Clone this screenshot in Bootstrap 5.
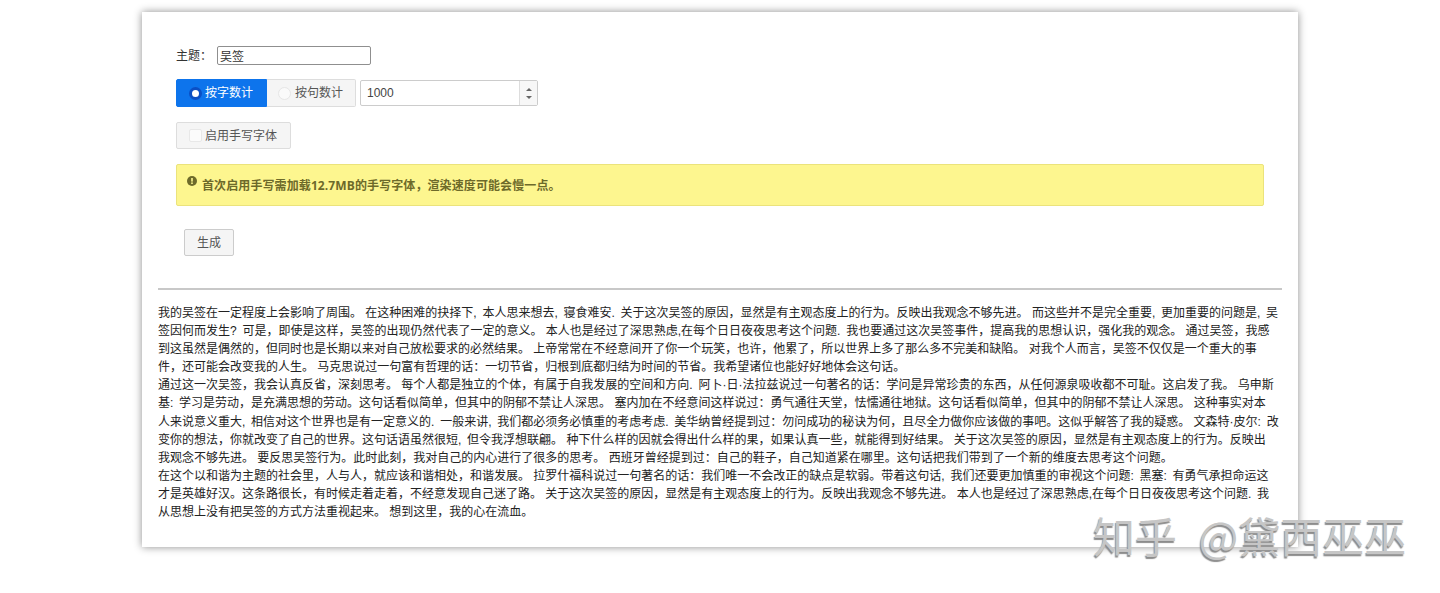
<!DOCTYPE html>
<html lang="zh-CN">
<head>
    <meta charset="UTF-8">
    <title>生成器</title>
    <link href="https://cdn.jsdelivr.net/npm/bootstrap@5.3.0/dist/css/bootstrap.min.css" rel="stylesheet">
    <style>
        body { background: #fff; font-family: "Liberation Sans", "Noto Sans CJK SC", sans-serif; font-size: 12px; color: #333; padding-top: 12px; min-height: 100vh; }
        .sheet { width: 1156px; height: 535px; margin-left: 142px; padding: 34px 16px 0; background: #fff; box-shadow: 0 0 8px rgba(0,0,0,.45); }
        .form-area { padding: 0 18px; }
        .topic-input { width: 154px; height: 19px; border: 1px solid #8f8f8f; border-radius: 2px; padding: 0 2px; font: inherit; color: #333; margin-left: 5px; }
        .seg-row { margin-top: 14px; }
        .seg-btn { height: 28px; display: flex; align-items: center; padding-left: 12px; gap: 3px; border: 1px solid #ddd; background: #f5f5f5; color: #555; }
        .seg-btn.on { background: #0d74ec; border-color: #0d74ec; color: #fff; width: 91px; border-radius: 2px 0 0 2px; }
        .seg-btn.off { width: 89px; border-left: 0; border-radius: 0 2px 2px 0; padding-left: 11px; gap: 4px; }
        .dot { width: 13px; height: 13px; border-radius: 50%; background: #fafafa; border: 1px solid #e6e6e6; flex: none; }
        .on .dot { background: #fff; border: 3px solid #0b4fc4; }
        .num-box { width: 178px; height: 26px; margin-left: 4px; border: 1px solid #ccc; border-radius: 2px; display: flex; align-items: stretch; background: #fff; }
        .num-val { flex: 1; padding: 3px 6px; font-size: 12px; color: #444; }
        .num-arrows { width: 18px; border-left: 1px solid #ddd; background: #f7f7f7; display: flex; flex-direction: column; align-items: center; justify-content: center; gap: 5px; }
        .up-tri { border: 3px solid transparent; border-top: 0; border-bottom: 3px solid #666; }
        .down-tri { border: 3px solid transparent; border-bottom: 0; border-top: 3px solid #666; }
        .hand-btn { width: 115px; height: 27px; margin-top: 15px; display: flex; align-items: center; padding-left: 12px; gap: 3px; border: 1px solid #ddd; border-radius: 2px; background: #f5f5f5; color: #555; }
        .box-mark { width: 13px; height: 13px; background: #fbfbfb; border: 1px solid #e8e8e8; border-radius: 2px; flex: none; }
        .note-bar { height: 42px; margin-top: 15px; padding: 10px; background: #fdf68f; border: 1px solid #ebe37c; border-radius: 2px; color: #6d6a2a; font-family: "Open Sans", "Noto Sans CJK SC", sans-serif; font-weight: 700; display: flex; gap: 5px; font-size: 12px; line-height: 21px; letter-spacing: .1px; }
        .note-icon { width: 10px; height: 10px; flex: none; margin-top: 1px; }
        .gen-btn { width: 50px; height: 27px; margin: 23px 0 0 8px; border: 1px solid #ccc; border-radius: 2px; background: #f5f5f5; color: #555; font-size: 12px; padding: 0; display: block; }
        .rule-line { height: 2px; background: #c8c8c8; margin: 32px 0 0; }
        .essay { margin-top: 14px; line-height: 18.1px; color: #222; font-size: 12px; width: 1124px; white-space: nowrap; }
        .mark-text { position: absolute; left: 1093px; top: 514px; font-size: 42px; line-height: 42px; word-spacing: 12px; color: #c6c6c6; white-space: nowrap; font-family: "Noto Sans CJK SC", sans-serif; font-weight: 400; text-shadow: -1px 2px 1px #8c8c8c; }
    </style>
</head>
<body>
    <div class="sheet">
        <div class="form-area">
            <div class="d-flex align-items-center"><span>主题：</span><input class="topic-input" type="text" value="吴签"></div>
            <div class="d-flex align-items-center seg-row">
                <div class="seg-btn on"><span class="dot"></span>按字数计</div>
                <div class="seg-btn off"><span class="dot"></span>按句数计</div>
                <div class="num-box">
                    <div class="num-val">1000</div>
                    <div class="num-arrows"><span class="up-tri"></span><span class="down-tri"></span></div>
                </div>
            </div>
            <div class="hand-btn"><span class="box-mark"></span>启用手写字体</div>
            <div class="note-bar">
                <svg class="note-icon" viewBox="0 0 10 10"><circle cx="5" cy="5" r="5" fill="#6d6a2a"/><rect x="4.2" y="2" width="1.6" height="3.6" fill="#fdf68f"/><rect x="4.2" y="6.4" width="1.6" height="1.6" fill="#fdf68f"/></svg>
                <span>首次启用手写需加载12.7MB的手写字体，渲染速度可能会慢一点。</span>
            </div>
            <button class="gen-btn" type="button">生成</button>
        </div>
        <div class="rule-line"></div>
        <div class="essay">
            <div>我的吴签在一定程度上会影响了周围。 在这种困难的抉择下,&thinsp; 本人思来想去,&thinsp; 寝食难安.&thinsp; 关于这次吴签的原因，显然是有主观态度上的行为。反映出我观念不够先进。 而这些并不是完全重要,&thinsp; 更加重要的问题是,&thinsp; 吴<br>签因何而发生?&thinsp; 可是，即使是这样，吴签的出现仍然代表了一定的意义。 本人也是经过了深思熟虑,在每个日日夜夜思考这个问题.&thinsp; 我也要通过这次吴签事件，提高我的思想认识，强化我的观念。 通过吴签，我感<br>到这虽然是偶然的，但同时也是长期以来对自己放松要求的必然结果。 上帝常常在不经意间开了你一个玩笑，也许，他累了，所以世界上多了那么多不完美和缺陷。 对我个人而言，吴签不仅仅是一个重大的事<br>件，还可能会改变我的人生。 马克思说过一句富有哲理的话：一切节省，归根到底都归结为时间的节省。我希望诸位也能好好地体会这句话。</div>
            <div>通过这一次吴签，我会认真反省，深刻思考。 每个人都是独立的个体，有属于自我发展的空间和方向.&thinsp; 阿卜·日·法拉兹说过一句著名的话：学问是异常珍贵的东西，从任何源泉吸收都不可耻。这启发了我。 乌申斯<br>基:&thinsp; 学习是劳动，是充满思想的劳动。这句话看似简单，但其中的阴郁不禁让人深思。 塞内加在不经意间这样说过：勇气通往天堂，怯懦通往地狱。这句话看似简单，但其中的阴郁不禁让人深思。 这种事实对本<br>人来说意义重大,&thinsp; 相信对这个世界也是有一定意义的.&thinsp; 一般来讲,&thinsp; 我们都必须务必慎重的考虑考虑.&thinsp; 美华纳曾经提到过：勿问成功的秘诀为何，且尽全力做你应该做的事吧。这似乎解答了我的疑惑。 文森特·皮尔:&thinsp; 改<br>变你的想法，你就改变了自己的世界。这句话语虽然很短,&thinsp; 但令我浮想联翩。 种下什么样的因就会得出什么样的果，如果认真一些，就能得到好结果。 关于这次吴签的原因，显然是有主观态度上的行为。反映出<br>我观念不够先进。 要反思吴签行为。此时此刻，我对自己的内心进行了很多的思考。 西班牙曾经提到过：自己的鞋子，自己知道紧在哪里。这句话把我们带到了一个新的维度去思考这个问题。</div>
            <div>在这个以和谐为主题的社会里，人与人，就应该和谐相处，和谐发展。 拉罗什福科说过一句著名的话：我们唯一不会改正的缺点是软弱。带着这句话,&thinsp; 我们还要更加慎重的审视这个问题:&thinsp; 黑塞:&thinsp; 有勇气承担命运这<br>才是英雄好汉。这条路很长，有时候走着走着，不经意发现自己迷了路。 关于这次吴签的原因，显然是有主观态度上的行为。反映出我观念不够先进。 本人也是经过了深思熟虑,在每个日日夜夜思考这个问题.&thinsp; 我<br>从思想上没有把吴签的方式方法重视起来。 想到这里，我的心在流血。</div>
        </div>
    </div>
    <div class="mark-text">知乎 @黛西巫巫</div>
    <script src="https://cdn.jsdelivr.net/npm/bootstrap@5.3.0/dist/js/bootstrap.bundle.min.js"></script>
</body>
</html>
